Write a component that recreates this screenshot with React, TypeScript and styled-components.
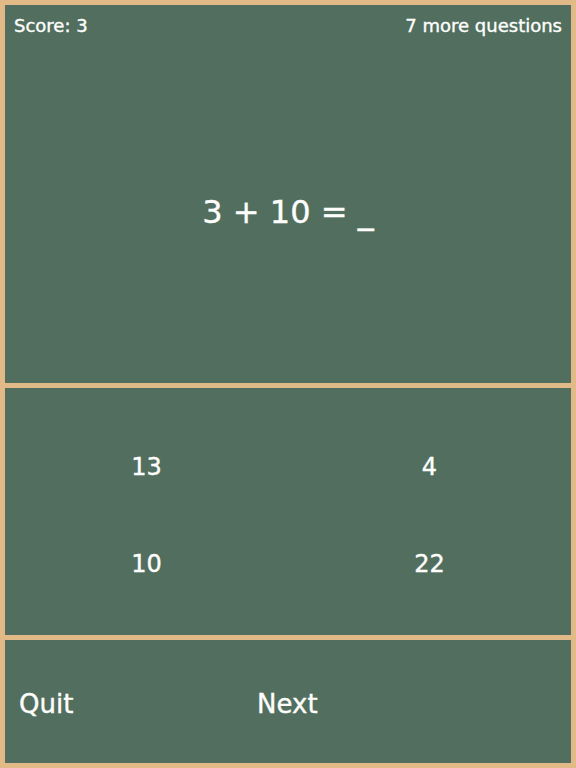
import React from "react";
import styled, { createGlobalStyle } from "styled-components";

const GlobalStyle = createGlobalStyle`
  html, body {
    margin: 0;
    padding: 0;
    background: #e2ba88;
  }
  * {
    box-sizing: border-box;
  }
`;

const Board = styled.div`
  width: 576px;
  height: 768px;
  background: #e2ba88;
  padding: 5px;
  display: flex;
  flex-direction: column;
  gap: 5px;
  font-family: "Comic Sans MS", "DejaVu Sans", sans-serif;
  color: #fdfdfb;
  -webkit-text-stroke: 0.4px #fdfdfb;
`;

const Panel = styled.div<{ $height: number }>`
  height: ${(p) => p.$height}px;
  flex: none;
  background: #516e5e;
  display: flex;
  flex-direction: column;
`;

const StatusBar = styled.div`
  height: 40px;
  padding: 0 9px;
  display: flex;
  align-items: center;
  justify-content: space-between;
  font-size: 18px;
`;

const Question = styled.div`
  flex: 1;
  display: flex;
  align-items: center;
  justify-content: center;
  font-size: 32px;
  padding-bottom: 4px;
`;

const AnswerGrid = styled.div`
  display: grid;
  grid-template-columns: 1fr 1fr;
  grid-auto-rows: 97px;
  padding-top: 30px;
`;

const Answer = styled.div`
  display: flex;
  align-items: center;
  justify-content: center;
  font-size: 24px;
  cursor: pointer;
`;

const Controls = styled.div`
  flex: 1;
  display: grid;
  grid-template-columns: 238px auto;
  align-items: center;
  padding: 4px 14px 0;
`;

const ControlButton = styled.div`
  font-size: 26px;
  cursor: pointer;
`;

const answers = ["13", "4", "10", "22"];

export default function App() {
  return (
    <>
      <GlobalStyle />
      <Board>
        <Panel $height={378}>
          <StatusBar>
            <span>Score: 3</span>
            <span>7 more questions</span>
          </StatusBar>
          <Question>3 + 10 = _</Question>
        </Panel>
        <Panel $height={247}>
          <AnswerGrid>
            {answers.map((a) => (
              <Answer key={a}>{a}</Answer>
            ))}
          </AnswerGrid>
        </Panel>
        <Panel $height={123}>
          <Controls>
            <ControlButton>Quit</ControlButton>
            <ControlButton>Next</ControlButton>
          </Controls>
        </Panel>
      </Board>
    </>
  );
}
